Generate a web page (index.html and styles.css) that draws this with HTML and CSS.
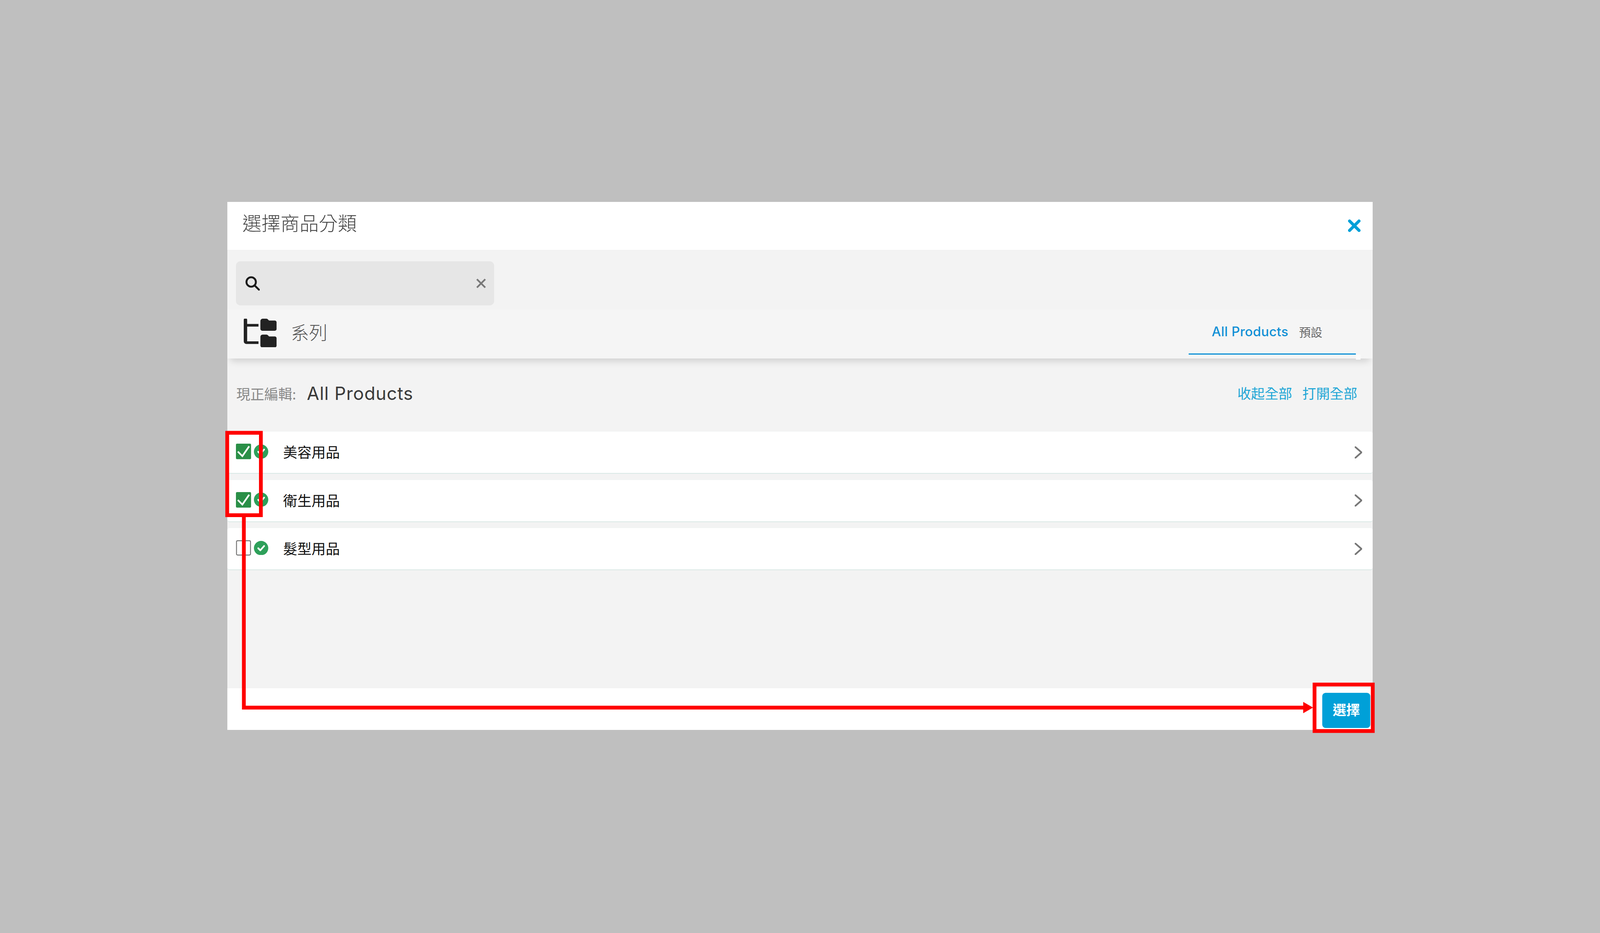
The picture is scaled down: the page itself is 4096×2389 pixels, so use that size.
FILE: index.html
```html
<!DOCTYPE html>
<html lang="zh-Hant">
<head>
<meta charset="utf-8">
<title>選擇商品分類</title>
<link rel="stylesheet" href="styles.css">
</head>
<body>
<div class="stage">
  <section class="modal">
    <header class="modal-head">
      <h1 class="modal-title">選擇商品分類</h1>
      <svg class="close-icon" viewBox="0 0 33 33"><path d="M4 4 29 29M29 4 4 29"/></svg>
    </header>
    <div class="search-band">
      <div class="search">
        <svg class="search-icon" viewBox="0 0 38 38"><circle cx="15.5" cy="15.5" r="12.5"/><path d="M24.5 24.5 36 36"/></svg>
        <svg class="clear-icon" viewBox="0 0 26 26"><path d="M2 2 24 24M24 2 2 24"/></svg>
      </div>
    </div>
    <div class="toolbar">
      <svg class="tree-icon" viewBox="0 0 87 76">
        <path d="M0 3a4 4 0 0 1 9 0V14H39V21H9V60H39V67H7a7 7 0 0 1-7-7Z"/>
        <path d="M50 0H60a5 5 0 0 1 4 2L67 5H82a5 5 0 0 1 5 5V27a5 5 0 0 1-5 5H49a5 5 0 0 1-5-5V6a6 6 0 0 1 6-6Z"/>
        <path d="M50 42H60a5 5 0 0 1 4 2L67 47H82a5 5 0 0 1 5 5V71a5 5 0 0 1-5 5H49a5 5 0 0 1-5-5V48a6 6 0 0 1 6-6Z"/>
      </svg>
      <span class="toolbar-label">系列</span>
      <div class="tab">
        <span class="tab-name">All Products</span>
        <span class="tab-default">預設</span>
      </div>
      <span class="tab-notch"></span>
    </div>
    <div class="crumb">
      <span class="crumb-label">現正編輯:</span>
      <span class="crumb-value">All Products</span>
      <div class="crumb-actions">
        <a class="crumb-link">收起全部</a>
        <a class="crumb-link">打開全部</a>
      </div>
    </div>
    <div class="rows">
      <div class="row">
        <svg class="check" viewBox="0 0 40 41"><rect width="40" height="41" rx="3" class="check-fill"/><path d="M5 21 17 33 35 7" class="check-mark"/></svg>
        <svg class="status" viewBox="0 0 38 38"><circle cx="19" cy="19" r="19" class="status-fill"/><path d="M11.5 19.5 17 25 27 13.5" class="status-mark"/></svg>
        <span class="row-label">美容用品</span>
        <svg class="chevron" viewBox="0 0 20 32"><path d="M2 2 18 16 2 30"/></svg>
      </div>
      <div class="row">
        <svg class="check" viewBox="0 0 40 41"><rect width="40" height="41" rx="3" class="check-fill"/><path d="M5 21 17 33 35 7" class="check-mark"/></svg>
        <svg class="status" viewBox="0 0 38 38"><circle cx="19" cy="19" r="19" class="status-fill"/><path d="M11.5 19.5 17 25 27 13.5" class="status-mark"/></svg>
        <span class="row-label">衛生用品</span>
        <svg class="chevron" viewBox="0 0 20 32"><path d="M2 2 18 16 2 30"/></svg>
      </div>
      <div class="row">
        <svg class="check" viewBox="0 0 40 41"><rect x="1.5" y="1.5" width="37" height="38" rx="3" class="check-empty"/></svg>
        <svg class="status" viewBox="0 0 38 38"><circle cx="19" cy="19" r="19" class="status-fill"/><path d="M11.5 19.5 17 25 27 13.5" class="status-mark"/></svg>
        <span class="row-label">髮型用品</span>
        <svg class="chevron" viewBox="0 0 20 32"><path d="M2 2 18 16 2 30"/></svg>
      </div>
    </div>
    <footer class="modal-foot">
      <button class="select-btn">選擇</button>
    </footer>
  </section>
  <svg class="annotations" viewBox="0 0 4232 2468">
    <rect x="601" y="1145" width="89" height="218" class="note-box"/>
    <rect x="3477" y="1811" width="154" height="123" class="note-box"/>
    <path d="M645 1367V1872H3450" class="note-line"/>
    <path d="M3447 1857 3473 1872 3447 1887Z" class="note-head"/>
  </svg>
</div>
</body>
</html>
```
FILE: styles.css
```css
* { box-sizing: border-box; }
html { zoom: 0.96786; }
html, body { margin: 0; padding: 0; }
body {
  font-family: Inter, "Noto Sans CJK TC", sans-serif;
  overflow: hidden;
}
.stage {
  position: relative;
  width: 4232px;
  height: 2468px;
  padding-top: 534px;
  display: flex;
  justify-content: center;
  align-items: flex-start;
  background: #bfbfbf;
}
.modal {
  width: 3030px;
  height: 1397px;
  display: flex;
  flex-direction: column;
  overflow: hidden;
  background: #f3f3f3;
}
.modal-head {
  height: 127px;
  flex: none;
  display: flex;
  align-items: center;
  justify-content: space-between;
  padding: 0 32px 10px 40px;
  background: #fff;
}
.modal-title {
  margin: 0;
  font-size: 50.5px;
  font-weight: 300;
  color: #444;
  line-height: 1.2;
}
.close-icon { width: 33px; height: 33px; margin-top: 10px; }
.close-icon path { fill: none; stroke: #00a0d8; stroke-width: 8; stroke-linecap: round; }
.search-band {
  height: 157px;
  flex: none;
  padding: 29px 0 0 23px;
  border-top: 2px solid #eee;
  background: #f3f3f3;
}
.search {
  width: 683px;
  height: 117px;
  display: flex;
  align-items: center;
  justify-content: space-between;
  padding: 0 22px 0 25px;
  border-radius: 12px;
  background: #e6e6e6;
}
.search-icon { width: 38px; height: 38px; }
.search-icon circle, .search-icon path { fill: none; stroke: #1a1a1a; stroke-width: 5; stroke-linecap: round; }
.clear-icon { width: 26px; height: 26px; }
.clear-icon path { fill: none; stroke: #777; stroke-width: 4.5; }
.toolbar {
  position: relative;
  height: 130px;
  flex: none;
  display: flex;
  align-items: flex-end;
  padding: 0 45px 10px 44px;
  background: #f5f5f5;
  box-shadow: 0 14px 18px -8px rgba(0, 0, 0, 0.16);
  z-index: 1;
}
.tree-icon { width: 87px; height: 76px; margin-bottom: 19px; fill: #222; flex: none; }
.toolbar-label {
  margin: 0 0 28px 37px;
  font-size: 48.5px;
  font-weight: 300;
  color: #555;
  line-height: 1.2;
}
.tab {
  width: 442px;
  height: 100px;
  margin-left: auto;
  display: flex;
  align-items: center;
  gap: 28px;
  padding: 0 0 18px 61px;
  border-bottom: 4px solid #0a8fd6;
}
.tab-name { font-size: 34.5px; font-weight: 500; letter-spacing: 0.35px; color: #1190d6; }
.tab-default { font-size: 31px; color: #666; }
.tab-notch {
  position: absolute;
  right: 32px;
  bottom: -4px;
  width: 13px;
  height: 14px;
  background: #fafafa;
}
.crumb {
  height: 193px;
  flex: none;
  display: flex;
  align-items: center;
  padding: 0 41px 8px 24px;
}
.crumb-label { font-size: 37px; color: #888; }
.crumb-value { margin-left: 28px; font-size: 47.5px; letter-spacing: 1px; color: #3a3a3a; }
.crumb-actions { margin-left: auto; margin-top: -4px; display: flex; gap: 27px; }
.crumb-link { font-size: 36.3px; color: #1ea6d6; }
.rows { display: flex; flex-direction: column; gap: 15px; flex: none; }
.row {
  height: 112.5px;
  display: flex;
  align-items: center;
  padding: 0 28px 4px 23px;
  border-radius: 6px;
  border-top: 2px solid #eef3f2;
  border-bottom: 3px solid #d9e8e5;
  background: #fff;
}
.check { width: 40px; height: 41px; flex: none; }
.check-fill { fill: #2a8f47; }
.check-mark { fill: none; stroke: #fff; stroke-width: 4.5; }
.check-empty { fill: #fff; stroke: #777; stroke-width: 2.5; }
.status { width: 38px; height: 38px; margin-left: 8px; flex: none; }
.status-fill { fill: #2ea05a; }
.status-mark { fill: none; stroke: #fff; stroke-width: 4.5; stroke-linecap: round; stroke-linejoin: round; }
.row-label { margin-left: 39px; font-size: 37.5px; font-weight: 400; color: #111; }
.chevron { width: 20px; height: 32px; margin-left: auto; margin-top: 4px; flex: none; }
.chevron path { fill: none; stroke: #777; stroke-width: 4.5; stroke-linecap: round; stroke-linejoin: round; }
.modal-foot {
  margin-top: auto;
  height: 112px;
  flex: none;
  display: flex;
  justify-content: flex-end;
  padding: 13px 6px 6px 0;
  border-top: 2px solid #eee;
  background: #fff;
}
.select-btn {
  width: 128px;
  height: 93px;
  padding: 0 0 6px;
  border: 0;
  border-radius: 9px;
  background: #00a0d8;
  color: #fff;
  font-family: inherit;
  font-size: 36px;
  font-weight: 700;
}
.annotations {
  position: absolute;
  left: 0;
  top: 0;
  width: 4232px;
  height: 2468px;
  pointer-events: none;
}
.note-box, .note-line { fill: none; stroke: #f00; stroke-width: 10; }
.note-head { fill: #f00; }
```
